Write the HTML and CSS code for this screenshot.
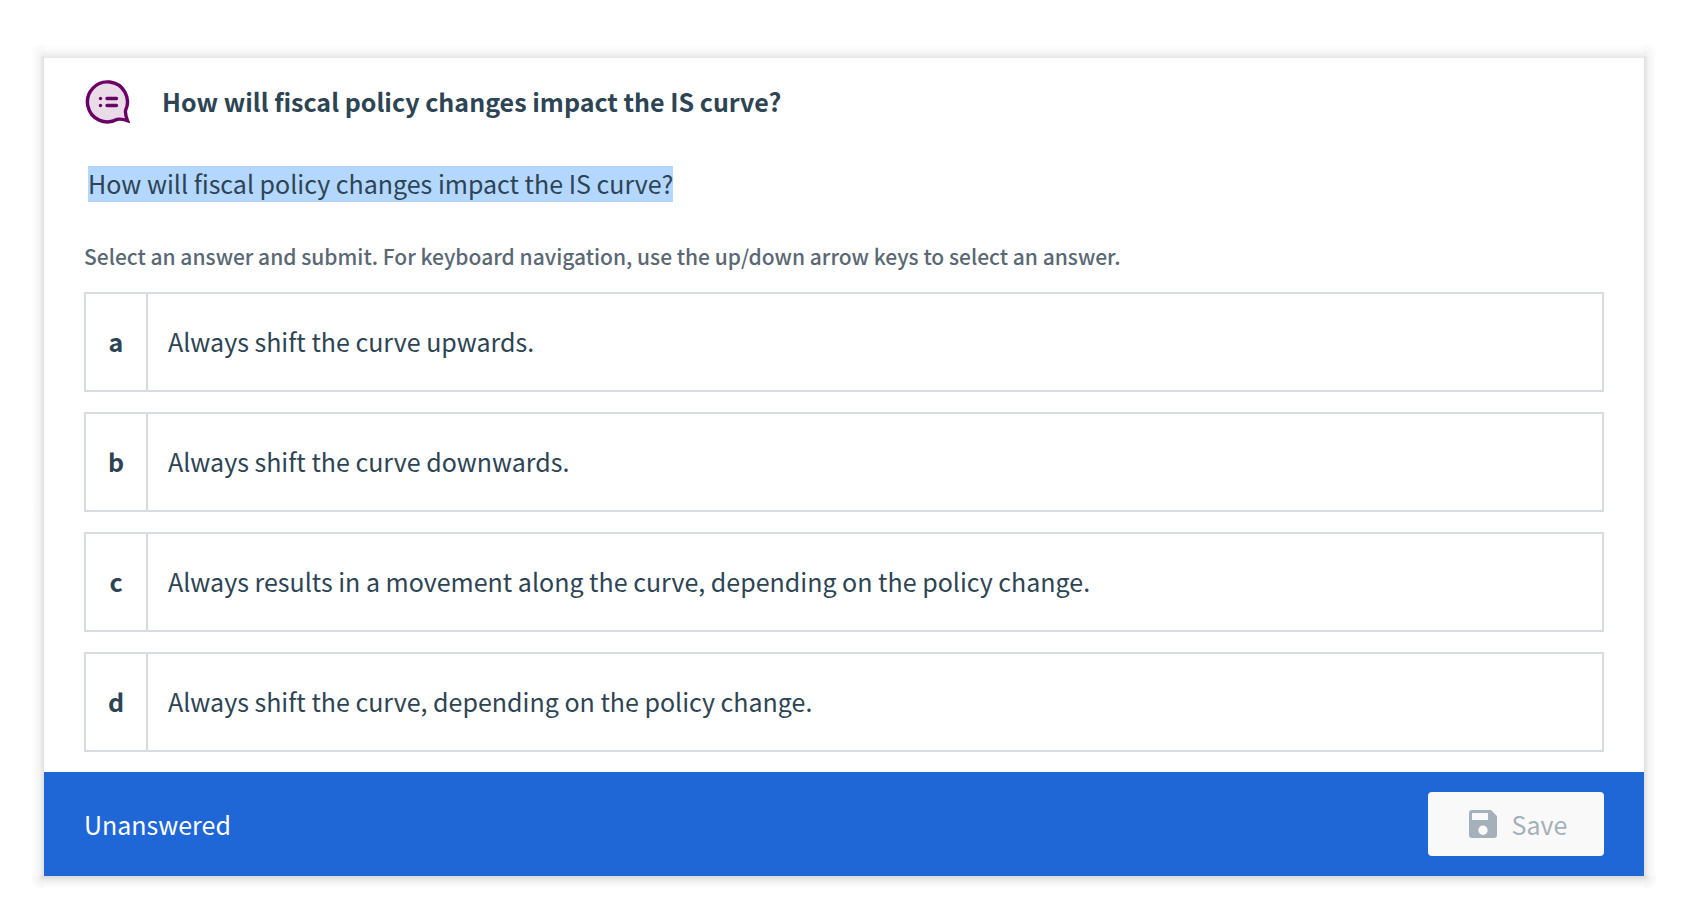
FILE: index.html
```html
<!DOCTYPE html>
<html lang="en">
<head>
    <meta charset="UTF-8">
    <meta name="viewport" content="width=device-width, initial-scale=1.0">
    <title>How will fiscal policy changes impact the IS curve?</title>
    <link rel="stylesheet" href="styles.css">
</head>
<body>
    <div class="shadow">
    <form class="question">
        <header class="question-header">
            <svg class="question-icon" width="46" height="46" viewBox="0 0 46 46" aria-hidden="true">
                <path d="M41.6 32.300A20 20 0 1 0 33.300 41.300Q37.500 40.500 43.500 42.600Q41 36.500 41.600 32.300Z" fill="#e9dbe8" stroke="#6a0066" stroke-width="3.400"/>
                <circle cx="16.500" cy="20.500" r="1.700" fill="#6a0066"/>
                <circle cx="16.500" cy="27.500" r="1.700" fill="#6a0066"/>
                <path d="M23 20.500H32.500M23 27.500H32.500" stroke="#6a0066" stroke-width="3.400" stroke-linecap="round"/>
            </svg>
            <h1>How will fiscal policy changes impact the IS curve?</h1>
        </header>

        <div class="question-body">
            <p class="prompt"><mark>How will fiscal policy changes impact the IS curve?</mark></p>

            <fieldset class="answers">
                <legend>Select an answer and submit. For keyboard navigation, use the up/down arrow keys to select an answer.</legend>
                <label class="answer">
                    <input type="radio" name="answer" value="a">
                    <span class="letter">a</span>
                    <span class="text">Always shift the curve upwards.</span>
                </label>
                <label class="answer">
                    <input type="radio" name="answer" value="b">
                    <span class="letter">b</span>
                    <span class="text">Always shift the curve downwards.</span>
                </label>
                <label class="answer">
                    <input type="radio" name="answer" value="c">
                    <span class="letter">c</span>
                    <span class="text">Always results in a movement along the curve, depending on the policy change.</span>
                </label>
                <label class="answer">
                    <input type="radio" name="answer" value="d">
                    <span class="letter">d</span>
                    <span class="text">Always shift the curve, depending on the policy change.</span>
                </label>
            </fieldset>
        </div>

        <footer class="question-footer">
            <span>Unanswered</span>
            <button type="submit" class="save" disabled>
                <svg width="28" height="28" viewBox="0 0 28 28" aria-hidden="true">
                    <path fill="currentColor" fill-rule="evenodd" d="M3 0H22L28 6V25Q28 28 25 28H3Q0 28 0 25V3Q0 0 3 0ZM3 3V10H19V3ZM14 15.500A4.700 4.700 0 1 0 14 24.900A4.700 4.700 0 1 0 14 15.500Z"/>
                </svg>
                Save
            </button>
        </footer>
    </form>
    </div>
</body>
</html>
```
FILE: styles.css
```css
* {
    box-sizing: border-box;
}
body {
    margin: 44px 52px 24px 32px;
    background: white;
    color: #2d4454;
    font-family: "Source Sans Pro", "Noto Sans CJK SC", sans-serif;
    font-size: 25px;
    line-height: 36px;
}
/* soft edge round the card: four corners, then four sides */
.shadow {
    padding: 12px;
    background:
        radial-gradient(circle at bottom right, #ededed, #f8f8f8 40%, white 90%) top left / 12px 12px,
        radial-gradient(circle at bottom left, #ededed, #f8f8f8 40%, white 90%) top right / 12px 12px,
        radial-gradient(circle at top right, #dcdcdc, #f3f3f3 40%, white 90%) bottom left / 12px 12px,
        radial-gradient(circle at top left, #dcdcdc, #f3f3f3 40%, white 90%) bottom right / 12px 12px,
        linear-gradient(to top, #ededed, #f8f8f8 40%, white) top / calc(100% - 24px) 12px,
        linear-gradient(to bottom, #d8d8d8, #f1f1f1 45%, white) bottom / calc(100% - 24px) 12px,
        linear-gradient(to left, #e0e0e0, #f4f4f4 40%, white) left / 12px calc(100% - 24px),
        linear-gradient(to right, #e0e0e0, #f4f4f4 40%, white) right / 12px calc(100% - 24px);
    background-repeat: no-repeat;
}
.question {
    background: white;
    border-top: 2px solid #ebebeb;
}
.question-header {
    display: flex;
    align-items: center;
    gap: 32px;
    padding: 20px 40px 0;
}
h1 {
    margin: 0;
    font-size: 25px;
    font-weight: bold;
}
.question-body {
    padding: 42px 40px 20px;
}
.prompt {
    margin: 0 4px 36px;
}
mark {
    display: block;
    width: fit-content;
    padding-bottom: 2px;
    background: #b3d7ff;
    color: inherit;
    line-height: 34px;
}
.answers {
    display: flex;
    flex-direction: column;
    gap: 20px;
    margin: 0;
    padding: 0;
    border: none;
}
legend {
    margin-bottom: 18px;
    padding: 0;
    color: #5a6875;
    font-size: 21px;
    font-weight: 500;
}
.answer {
    display: flex;
    position: relative;
    min-height: 100px;
    border: 2px solid #d8dce1;
    cursor: pointer;
}
.answer input {
    position: absolute;
    opacity: 0;
}
.answer:focus-within {
    border-color: #1f66d6;
}
.letter,
.text {
    display: flex;
    align-items: center;
    padding-bottom: 2px;
}
.letter {
    justify-content: center;
    width: 62px;
    border-right: 2px solid #d8dce1;
    font-weight: bold;
}
.text {
    flex: 1;
    padding-left: 20px;
    padding-right: 20px;
}
.question-footer {
    display: flex;
    align-items: center;
    justify-content: space-between;
    padding: 20px 40px;
    background: #1f66d6;
    color: white;
}
.save {
    display: flex;
    align-items: center;
    justify-content: center;
    gap: 15px;
    width: 176px;
    height: 64px;
    padding: 0 0 0 4px;
    border: none;
    border-radius: 4px;
    background: #f9f9f9;
    color: #a4b0ba;
    font: inherit;
}
```
